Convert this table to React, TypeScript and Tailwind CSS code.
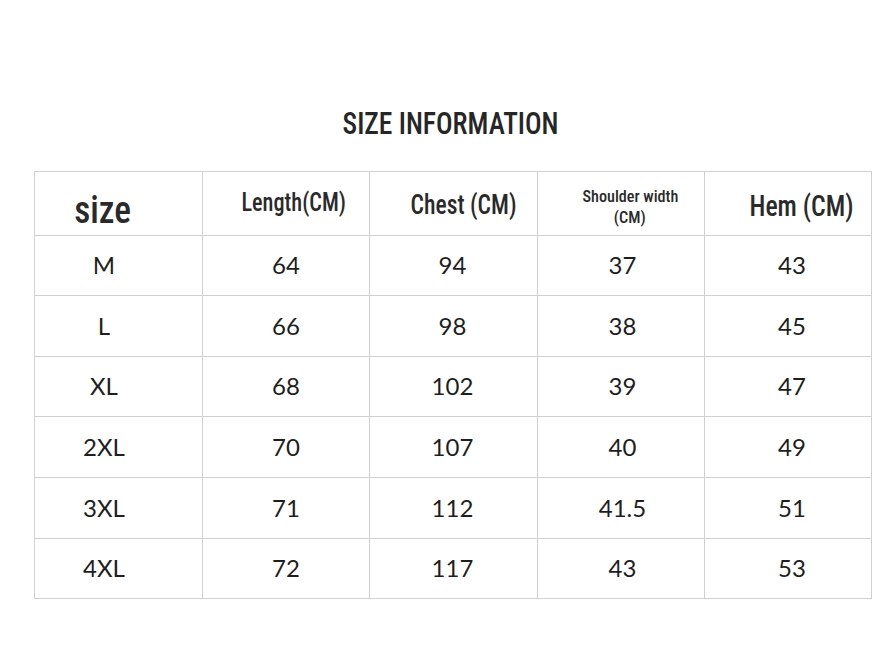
import React from "react";

const rows = [
  ["M", "64", "94", "37", "43"],
  ["L", "66", "98", "38", "45"],
  ["XL", "68", "102", "39", "47"],
  ["2XL", "70", "107", "40", "49"],
  ["3XL", "71", "112", "41.5", "51"],
  ["4XL", "72", "117", "43", "53"],
];

const rowH = ["h-[60px]", "h-[61px]", "h-[60px]", "h-[61px]", "h-[61px]", "h-[60px]"];
const bodyPad = ["pr-[29px]", "pl-0", "pr-[2px]", "pl-[3px]", "pl-[8px]"];

const headBase =
  "h-[64px] border-r border-b border-[#d0d0d0] font-['Roboto_Condensed',Roboto,sans-serif] font-medium text-[#2a2a2a]";
const headCell = `${headBase} flex justify-center items-start leading-none`;

export default function App() {
  return (
    <div className="w-[896px] h-[672px] bg-white flex flex-col text-[#222]">
      <div className="h-[171px] flex items-start justify-center pt-[107px] pl-[5px]">
        <h1 className="inline-block origin-center scale-x-[0.86] font-['Roboto_Condensed',Roboto,sans-serif] text-[32px] leading-none font-medium text-[#262626]">
          SIZE INFORMATION
        </h1>
      </div>
      <div className="ml-[34px] w-[838px] border-l border-t border-[#d0d0d0] grid grid-cols-[168px_167px_168px_167px_167px]">
        <div className={`${headCell} pt-[19px] pr-[31px] text-[38px]`}>
          <span className="inline-block origin-center scale-x-[0.93]">size</span>
        </div>
        <div className={`${headCell} pt-[18px] pl-[16px] text-[25px]`}>
          <span className="inline-block origin-center scale-x-[0.89]">Length(CM)</span>
        </div>
        <div className={`${headCell} pt-[20px] pl-[20px] text-[27px]`}>
          <span className="inline-block origin-center scale-x-[0.875]">Chest (CM)</span>
        </div>
        <div className={`${headBase} flex flex-col items-center pt-[14px] pl-[18px] text-[17px] leading-[21px]`}>
          <span className="block origin-center scale-x-[0.95] whitespace-nowrap">Shoulder width</span>
          <span className="block origin-center scale-x-[0.95]">(CM)</span>
        </div>
        <div className={`${headCell} pt-[19px] pl-[28px] text-[30px]`}>
          <span className="inline-block origin-center scale-x-[0.86]">Hem (CM)</span>
        </div>
        {rows.map((r, i) =>
          r.map((c, j) => (
            <div
              key={`${i}-${j}`}
              className={`${rowH[i]} border-r border-b border-[#d0d0d0] flex items-center justify-center pb-[1px] font-[Lato,'Open_Sans',sans-serif] text-[24px] text-[#1e1e1e] ${bodyPad[j]}`}
            >
              {c}
            </div>
          ))
        )}
      </div>
    </div>
  );
}
